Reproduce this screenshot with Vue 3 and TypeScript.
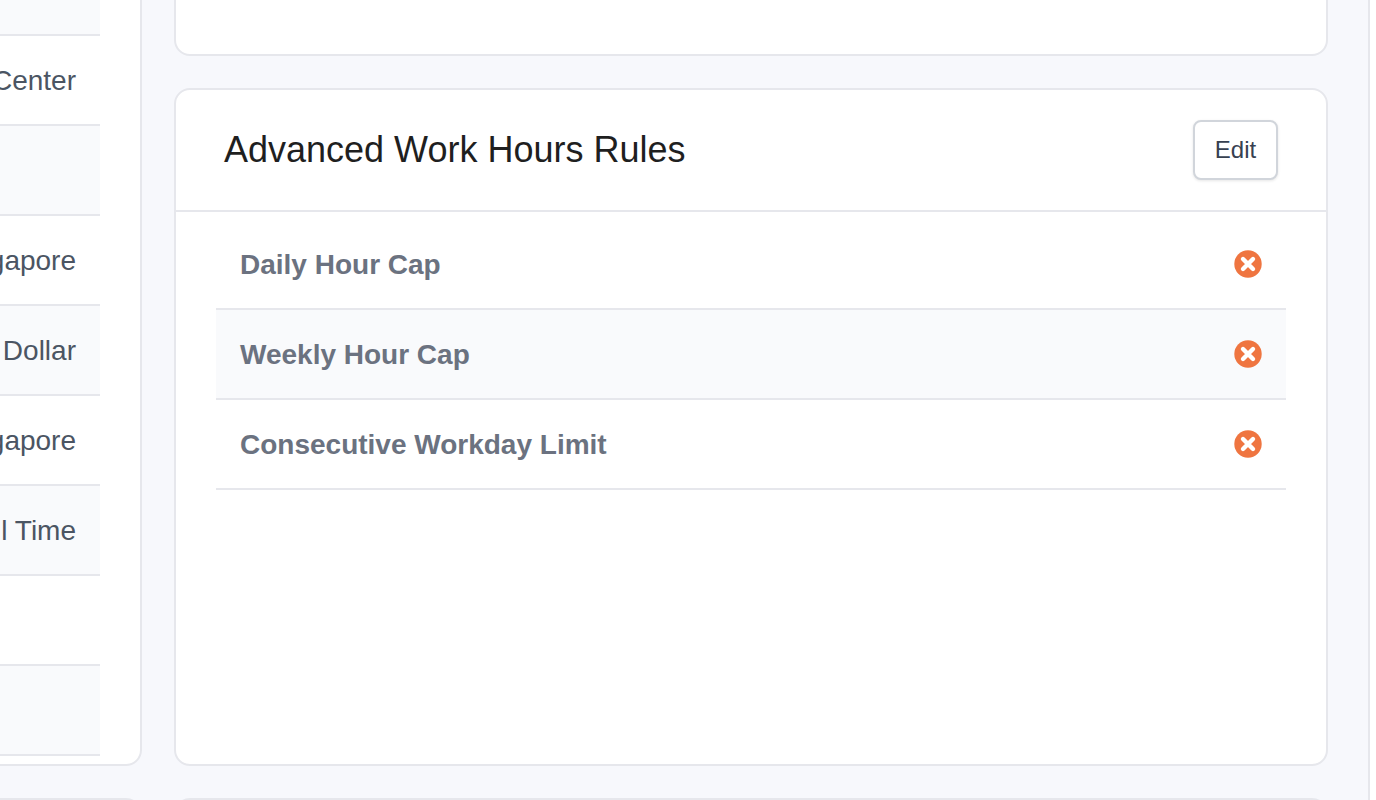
<script setup lang="ts">
const fieldRows = [
  { value: '' },
  { value: 'Cost Center' },
  { value: '' },
  { value: 'Singapore' },
  { value: 'Singapore Dollar' },
  { value: 'Singapore' },
  { value: 'Full Time' },
  { value: '' },
  { value: '' },
]

const rules = ['Daily Hour Cap', 'Weekly Hour Cap', 'Consecutive Workday Limit']
</script>

<template>
  <div class="page">
    <div class="content">
      <div class="grid">
        <section class="card left-card">
          <ul class="field-list">
            <li v-for="(row, i) in fieldRows" :key="i" class="field-row">{{ row.value }}</li>
          </ul>
        </section>

        <div class="right-col">
          <section class="card top-card"></section>

          <section class="card rules-card">
            <header class="rules-header">
              <h2>Advanced Work Hours Rules</h2>
              <button class="btn-edit" type="button">Edit</button>
            </header>
            <ul class="rule-list">
              <li v-for="rule in rules" :key="rule" class="rule-row">
                <span class="rule-name">{{ rule }}</span>
                <svg class="rule-icon" viewBox="0 0 28 28" aria-hidden="true">
                  <circle cx="14" cy="14" r="13.7" fill="#ef7540" />
                  <path d="M9 9l10 10M19 9L9 19" stroke="#fff" stroke-width="4.4" stroke-linecap="round" fill="none" />
                </svg>
              </li>
            </ul>
          </section>
        </div>

        <section class="card next-card next-left"></section>
        <section class="card next-card"></section>
      </div>
    </div>
  </div>
</template>

<style>
html,
body {
  margin: 0;
  background: #fff;
}
</style>

<style scoped>
.page {
  height: 800px;
  overflow: hidden;
  font-family: "Liberation Sans", Arial, sans-serif;
}

.content {
  width: 1368px;
  height: 800px;
  overflow: hidden;
  background: #f7f8fc;
  border-right: 2px solid #e6e7ec;
}

.grid {
  display: grid;
  grid-template-columns: 142px 1154px;
  grid-auto-rows: min-content;
  column-gap: 32px;
  row-gap: 32px;
  margin-top: -200px;
}

.card {
  box-sizing: border-box;
  background: #fff;
  border: 2px solid #e6e7ec;
  border-radius: 16px;
}

.left-card {
  border-left: none;
  border-top-left-radius: 0;
  border-bottom-left-radius: 0;
  height: 966px;
  padding-top: 144px;
}

.field-list,
.rule-list {
  list-style: none;
  margin: 0;
  padding: 0;
}

.field-row {
  box-sizing: border-box;
  width: 100px;
  height: 90px;
  padding: 2px 24px 0 0;
  display: flex;
  align-items: center;
  justify-content: flex-end;
  white-space: nowrap;
  font-size: 28px;
  color: #4b5563;
  border-bottom: 2px solid #e6e7ec;
}

.field-row:nth-child(odd) {
  background: #f9fafc;
}

.right-col {
  display: flex;
  flex-direction: column;
  gap: 32px;
}

.top-card {
  height: 256px;
}

.rules-card {
  height: 678px;
}

.rules-header {
  display: flex;
  align-items: center;
  justify-content: space-between;
  height: 122px;
  box-sizing: border-box;
  padding: 0 48px;
  border-bottom: 2px solid #e6e7ec;
}

.rules-header h2 {
  margin: 0;
  font-size: 36px;
  font-weight: 400;
  color: #1f1f1f;
}

.btn-edit {
  box-sizing: border-box;
  width: 85px;
  height: 60px;
  padding: 0;
  background: #fff;
  border: 2px solid #d1d5db;
  border-radius: 8px;
  box-shadow: 0 1px 3px rgba(0, 0, 0, 0.1);
  font-family: inherit;
  font-size: 24px;
  color: #374151;
}

.rule-list {
  padding: 8px 40px 0;
}

.rule-row {
  box-sizing: border-box;
  height: 90px;
  padding: 0 24px;
  display: flex;
  align-items: center;
  justify-content: space-between;
  border-bottom: 2px solid #e6e7ec;
}

.rule-row:nth-child(even) {
  background: #f9fafc;
}

.rule-name {
  padding-top: 2px;
  font-size: 28px;
  font-weight: 700;
  color: #6b7280;
}

.rule-icon {
  width: 28px;
  height: 28px;
}

.next-card {
  height: 200px;
}

.next-left {
  border-left: none;
  border-top-left-radius: 0;
}
</style>
